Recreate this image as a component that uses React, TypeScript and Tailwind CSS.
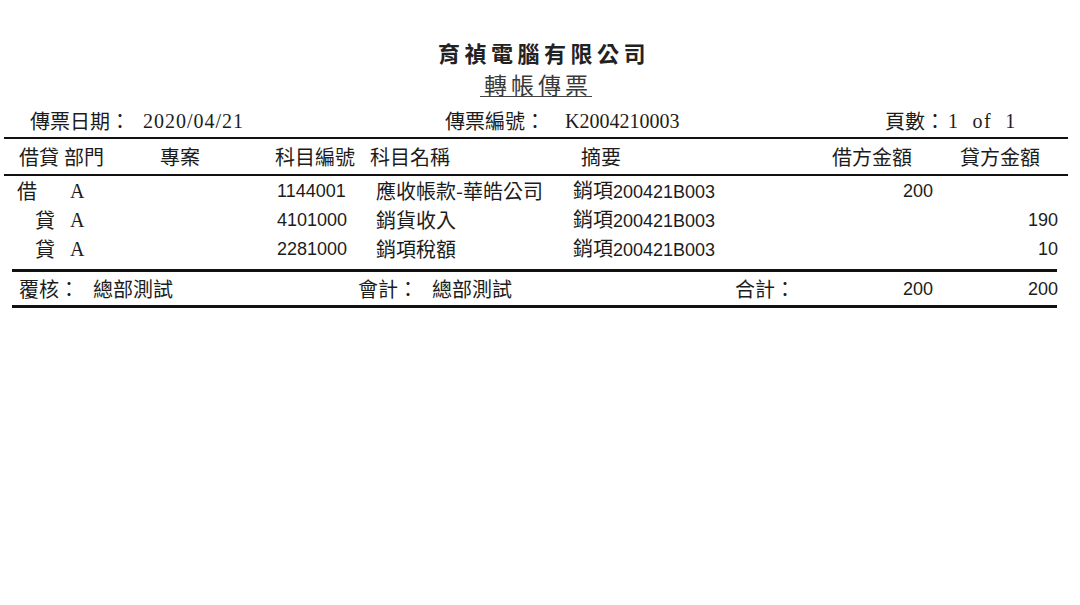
import React from "react"

// ---------------------------------------------------------------------------
// Fonts
// ---------------------------------------------------------------------------
const CJK = "font-['Noto_Sans_CJK_TC',sans-serif]"
const NUM = "font-['Liberation_Sans','Noto_Sans_CJK_TC',sans-serif] text-[18px]"
const SERIF = "font-['Liberation_Serif','Noto_Sans_CJK_TC',serif] text-[20px]"

interface EntryRow {
  side: "借" | "貸"
  dept: string
  code: string
  name: string
  memoCjk: string
  memoNo: string
  debit?: number
  credit?: number
}

const rows: EntryRow[] = [
  { side: "借", dept: "A", code: "1144001", name: "應收帳款-華皓公司", memoCjk: "銷項", memoNo: "200421B003", debit: 200 },
  { side: "貸", dept: "A", code: "4101000", name: "銷貨收入", memoCjk: "銷項", memoNo: "200421B003", credit: 190 },
  { side: "貸", dept: "A", code: "2281000", name: "銷項稅額", memoCjk: "銷項", memoNo: "200421B003", credit: 10 },
]

export default function App() {
  const totalDebit = rows.reduce((s, r) => s + (r.debit ?? 0), 0)
  const totalCredit = rows.reduce((s, r) => s + (r.credit ?? 0), 0)

  return (
    <div className={`w-[1080px] h-[605px] bg-white text-[#1c1c1c] text-[20px] ${CJK}`}>
      {/* Title block */}
      <div className="pt-[39px] text-center">
        <div className="h-[26px] leading-[26px] text-[22px] font-bold tracking-[4.5px] pl-[8px] text-[#222]">
          育禎電腦有限公司
        </div>
        <div className="mt-[6px] h-[25px] pr-[8px]">
          <span className="inline-block leading-[22px] text-[23px] tracking-[4px] pl-[4px] pb-[1px] border-b border-[#444] text-[#3a3a3a]">
            轉帳傳票
          </span>
        </div>
      </div>

      <div className="ml-[4px] w-[1064px]">
        {/* Voucher info */}
        <div className="h-[41px] pt-[9px] pl-[26px] flex items-center leading-[24px]">
          <span className="w-[113px] shrink-0">傳票日期：</span>
          <span className={`w-[302px] shrink-0 tracking-[1px] ${SERIF}`}>2020/04/21</span>
          <span className="w-[120px] shrink-0">傳票編號：</span>
          <span className={`w-[320px] shrink-0 ${SERIF}`}>K2004210003</span>
          <span className="w-[63px] shrink-0">頁數：</span>
          <span className={`whitespace-pre tracking-[1.5px] ${SERIF}`}>1  of  1</span>
        </div>
        <div className="h-[2px] bg-[#111]" />

        {/* Column headers */}
        <div className="h-[35px] pl-[15px] flex items-center leading-[24px]">
          <span className="w-[45px] shrink-0">借貸</span>
          <span className="w-[96px] shrink-0">部門</span>
          <span className="w-[115px] shrink-0">專案</span>
          <span className="w-[95px] shrink-0">科目編號</span>
          <span className="w-[211px] shrink-0">科目名稱</span>
          <span className="w-[251px] shrink-0">摘要</span>
          <span className="w-[128px] shrink-0">借方金額</span>
          <span>貸方金額</span>
        </div>
        <div className="h-[2px] bg-[#111]" />

        {/* Entries */}
        <div className="pb-[6px]">
          {rows.map((r) => (
            <div key={r.code} className="h-[29px] pl-[13px] flex items-center leading-[24px]">
              <span className={`w-[53px] shrink-0 ${r.side === "貸" ? "pl-[18px]" : ""}`}>{r.side}</span>
              <span className={`w-[207px] shrink-0 ${SERIF}`}>{r.dept}</span>
              <span className={`w-[99px] shrink-0 ${NUM}`}>{r.code}</span>
              <span className="w-[197px] shrink-0 whitespace-nowrap">{r.name}</span>
              <span className="w-[240px] shrink-0 whitespace-nowrap">
                {r.memoCjk}
                <span className={NUM}>{r.memoNo}</span>
              </span>
              <span className={`w-[120px] shrink-0 text-right ${NUM}`}>{r.debit ?? ""}</span>
              <span className={`w-[125px] shrink-0 text-right ${NUM}`}>{r.credit ?? ""}</span>
            </div>
          ))}
        </div>
        <div className="ml-[8px] w-[1045px] h-[3px] bg-[#111]" />

        {/* Totals / sign-off */}
        <div className="h-[33px] pl-[15px] flex items-center leading-[24px]">
          <span className="w-[74px] shrink-0">覆核：</span>
          <span className="w-[265px] shrink-0">總部測試</span>
          <span className="w-[74px] shrink-0">會計：</span>
          <span className="w-[303px] shrink-0">總部測試</span>
          <span className="w-[78px] shrink-0">合計：</span>
          <span className={`w-[120px] shrink-0 text-right ${NUM}`}>{totalDebit}</span>
          <span className={`w-[125px] shrink-0 text-right ${NUM}`}>{totalCredit}</span>
        </div>
        <div className="ml-[8px] w-[1045px] h-[3px] bg-[#111]" />
      </div>
    </div>
  )
}
